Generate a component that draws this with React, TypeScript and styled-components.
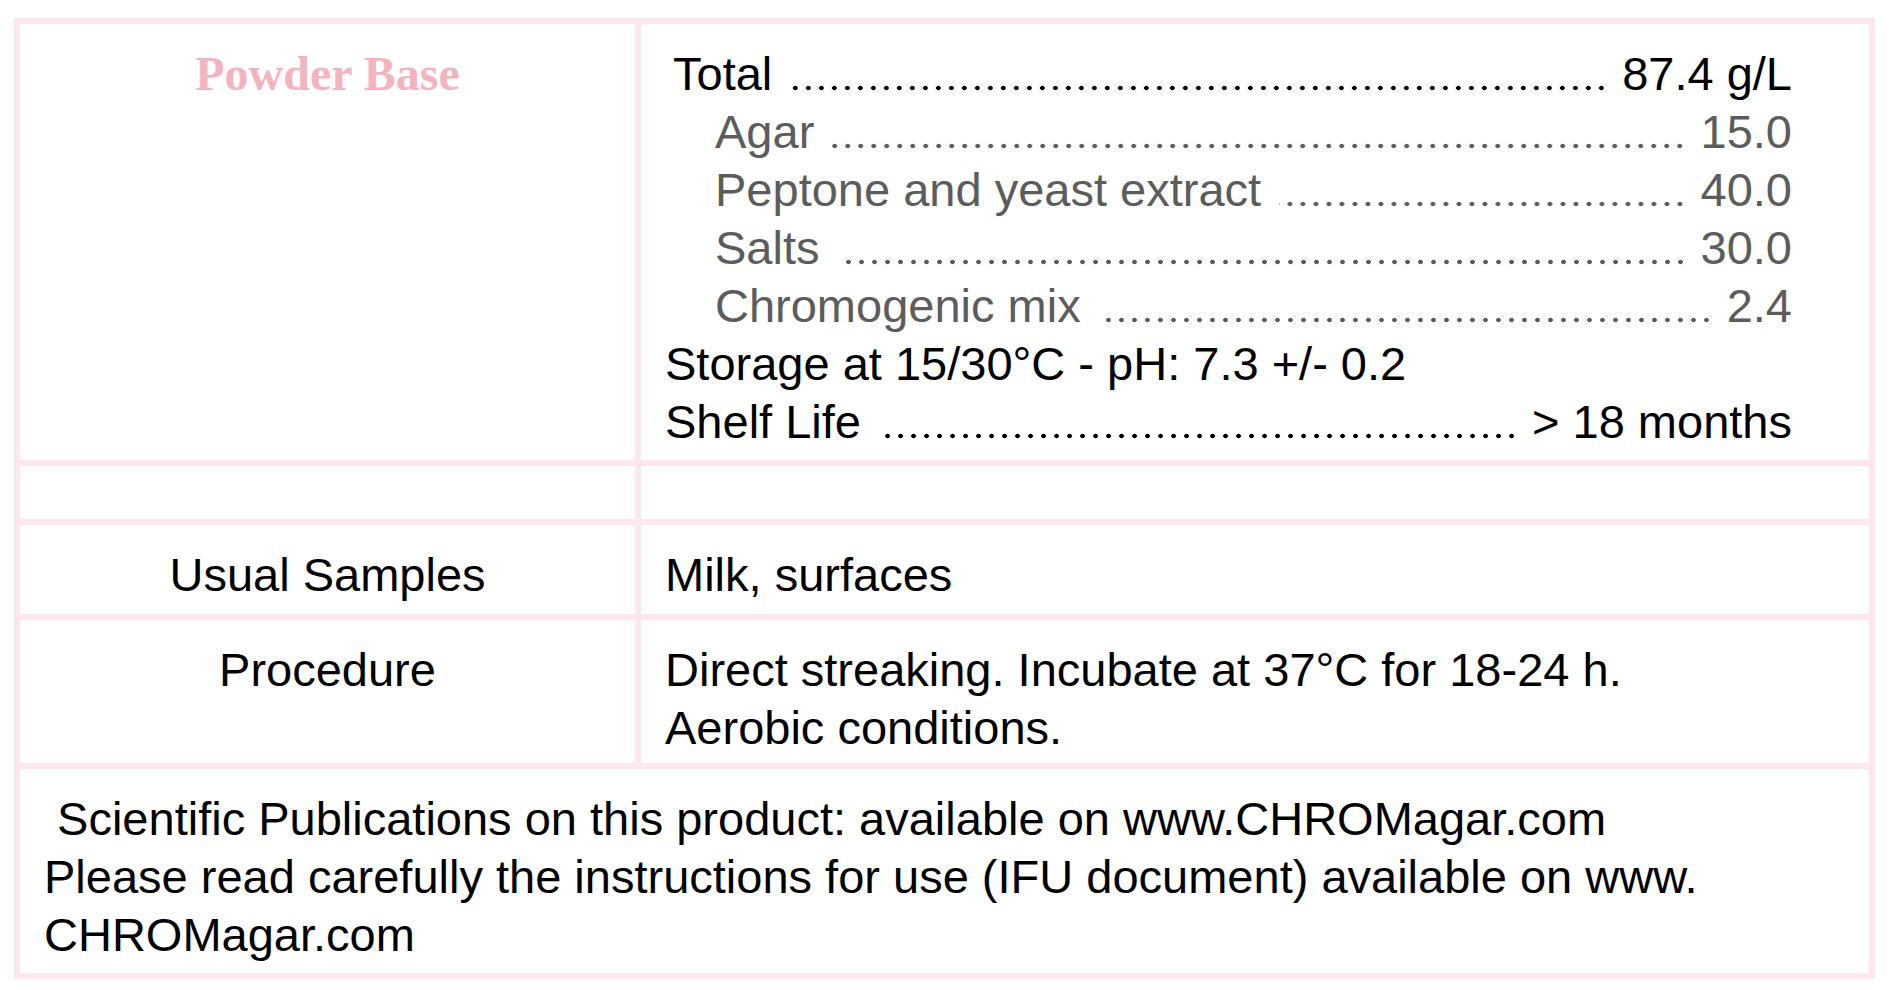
import styled, { createGlobalStyle } from 'styled-components';

const GlobalStyle = createGlobalStyle`
    body {
        margin: 0;
        background: #fff;
        font-family: 'Liberation Sans', Arial, sans-serif;
    }
`;

const Page = styled.div`
    padding: 18px 0 0 14px;
`;

// the pink rules between the cells are the grid background showing through the gaps
const Sheet = styled.div`
    display: grid;
    grid-template-columns: 615px 1228px;
    grid-template-rows: 436px 53px 89px 143px 204px;
    gap: 6px;
    padding: 6px;
    width: fit-content;
    background: #fce8ec;
`;

const Cell = styled.div<{ $center?: boolean; $span?: boolean }>`
    background: #fff;
    padding: 21px 24px 9px;
    font-size: 47px;
    line-height: 58px;
    color: #000;
    text-align: ${(p) => (p.$center ? 'center' : 'left')};
    grid-column: ${(p) => (p.$span ? '1 / -1' : 'auto')};
`;

const Formula = styled(Cell)`
    padding-right: 77px;
`;

const Heading = styled.div`
    font-family: 'Liberation Serif', 'Times New Roman', serif;
    font-weight: 700;
    font-size: 48px;
    color: #f2b5bf;
`;

const Line = styled.div<{ $indent?: number; $muted?: boolean }>`
    display: flex;
    padding-left: ${(p) => p.$indent ?? 0}px;
    color: ${(p) => (p.$muted ? '#5c5c5c' : '#000')};
    white-space: nowrap;
`;

// dotted leader, dots sit on the baseline and run flush to the value
const Leader = styled.span`
    flex: 1;
    margin: 0 14px 0 18px;
    background-image: radial-gradient(circle, currentColor 0 2px, transparent 2.6px);
    background-size: 13px 6px;
    background-repeat: repeat-x;
    background-position: right 0 top 40px;
`;

const ingredients = [
    { name: 'Agar', amount: '15.0' },
    { name: 'Peptone and yeast extract', amount: '40.0' },
    { name: 'Salts', amount: '30.0' },
    { name: 'Chromogenic mix', amount: '2.4' }
];

const App = () => (
    <Page>
        <GlobalStyle />
        <Sheet>
            <Cell $center>
                <Heading>Powder Base</Heading>
            </Cell>
            <Formula>
                <Line $indent={8}>
                    <span>Total</span>
                    <Leader />
                    <span>87.4 g/L</span>
                </Line>
                {ingredients.map((item) => (
                    <Line key={item.name} $indent={50} $muted>
                        <span>{item.name}</span>
                        <Leader />
                        <span>{item.amount}</span>
                    </Line>
                ))}
                <Line>Storage at 15/30°C - pH: 7.3 +/- 0.2</Line>
                <Line>
                    <span>Shelf Life</span>
                    <Leader />
                    <span>&gt; 18 months</span>
                </Line>
            </Formula>

            <Cell />
            <Cell />

            <Cell $center>Usual Samples</Cell>
            <Cell>Milk, surfaces</Cell>

            <Cell $center>Procedure</Cell>
            <Cell>
                Direct streaking. Incubate at 37°C for 18-24 h.
                <br />
                Aerobic conditions.
            </Cell>

            <Cell $span>
                {'\u00a0'}Scientific Publications on this product: available on www.CHROMagar.com
                <br />
                Please read carefully the instructions for use (IFU document) available on www.
                <br />
                CHROMagar.com
            </Cell>
        </Sheet>
    </Page>
);

export default App;
